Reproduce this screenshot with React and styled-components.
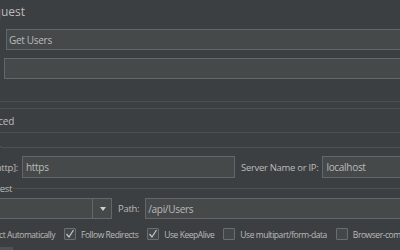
import React from "react";
import styled, { createGlobalStyle } from "styled-components";

const Global = createGlobalStyle`
  html, body { margin: 0; padding: 0; background: #3c3f41; overflow: hidden; }
  body { width: 400px; height: 250px; font-family: "Open Sans", "Noto Sans", sans-serif; color: #bbbbbb; }
`;

const Page = styled.div`
  width: 470px;
  display: flex;
  flex-direction: column;
`;

const Title = styled.div`
  height: 24px;
  width: 25px;
  display: flex;
  justify-content: flex-end;
  font-size: 12px;
  line-height: 24px;
  white-space: nowrap;
  margin-bottom: 5px;
`;

const Row = styled.div`
  display: flex;
  align-items: center;
  height: ${(p) => p.$h || 21}px;
  margin-top: ${(p) => p.$mt || 0}px;
  gap: ${(p) => (p.$gap != null ? p.$gap : 4)}px;
`;

const LabelCell = styled.div`
  width: ${(p) => p.$w}px;
  flex: none;
  display: flex;
  justify-content: flex-end;
  white-space: nowrap;
  font-size: 9.5px;
  letter-spacing: -0.3px;
`;

const Label = styled.span`
  flex: none;
  white-space: nowrap;
  font-size: 9.5px;
  letter-spacing: -0.3px;
`;

const Field = styled.div`
  box-sizing: border-box;
  height: 100%;
  ${(p) => (p.$w ? `width: ${p.$w}px; flex: none;` : "flex: 1;")}
  background: #45494a;
  border: 1px solid #646768;
  display: flex;
  align-items: center;
  padding-left: ${(p) => p.$pl || 2}px;
  font-size: 10px;
  letter-spacing: -0.3px;
  white-space: nowrap;
`;

const Line = styled.div`
  height: 1px;
  background: ${(p) => p.$c || "#4c4f51"};
  margin-top: ${(p) => p.$mt || 0}px;
`;

const TabRow = styled.div`
  height: 23px;
  width: 14px;
  display: flex;
  justify-content: flex-end;
  align-items: center;
  font-size: 10px;
  letter-spacing: -0.3px;
  white-space: nowrap;
`;

const Titled = styled.div`
  display: flex;
  align-items: center;
  height: 9px;
  margin-top: ${(p) => p.$mt || 0}px;
`;

const TitleText = styled.div`
  width: ${(p) => p.$w}px;
  flex: none;
  display: flex;
  justify-content: flex-end;
  white-space: nowrap;
  font-size: 9.5px;
  letter-spacing: -0.3px;
  line-height: 9px;
`;

const TitleRule = styled.div`
  flex: 1;
  height: 1px;
  background: #4e5153;
  margin-left: 1px;
`;

const Combo = styled.div`
  box-sizing: border-box;
  height: 100%;
  width: 172px;
  margin-left: -60px;
  flex: none;
  display: flex;
  background: #45494a;
  border: 1px solid #646768;
`;

const ComboText = styled.div`
  flex: 1;
  display: flex;
  align-items: center;
  padding-left: 3px;
  font-size: 10px;
`;

const ComboButton = styled.div`
  width: 18px;
  flex: none;
  border-left: 1px solid #646768;
  display: flex;
  align-items: center;
  justify-content: center;
`;

const Arrow = styled.div`
  width: 0;
  height: 0;
  border-left: 3.5px solid transparent;
  border-right: 3.5px solid transparent;
  border-top: 4px solid #d0d0d0;
  margin-left: 1px;
`;

const Checks = styled.div`
  display: flex;
  align-items: center;
  height: 12px;
  margin-top: 9px;
  gap: 9px;
`;

const CheckItem = styled.div`
  display: flex;
  align-items: center;
  gap: 5px;
  flex: none;
`;

const Box = styled.div`
  box-sizing: border-box;
  width: 12px;
  height: 12px;
  border: 1px solid #6b6e70;
  background: #43474a;
  border-radius: 1px;
  display: flex;
  align-items: center;
  justify-content: center;
`;

const CheckLabel = styled.span`
  font-size: 8.5px;
  letter-spacing: -0.45px;
  white-space: nowrap;
`;

const Stub = styled.div`
  width: 13px;
  height: 4px;
  margin-top: 7px;
  background: #4e5254;
`;

const Check = ({ on, children }) => (
  <CheckItem>
    <Box>
      {on && (
        <svg width="10" height="10" viewBox="0 0 10 10">
          <polyline points="1.5,5 4,8 8.5,1" fill="none" stroke="#c8c8c8" strokeWidth="1.2" />
        </svg>
      )}
    </Box>
    <CheckLabel>{children}</CheckLabel>
  </CheckItem>
);

export default function App() {
  return (
    <>
      <Global />
      <Page>
        <Title>HTTP Request</Title>
        <Row $gap={6}>
          <LabelCell $w={0}>Name:</LabelCell>
          <Field $pl={2}>Get Users</Field>
        </Row>
        <Row $mt={8}>
          <LabelCell $w={0}>Comments:</LabelCell>
          <Field />
        </Row>
        <Line $mt={22} />
        <Line $mt={6} />
        <TabRow>Basic Advanced</TabRow>
        <Line />
        <Titled $mt={10}>
          <TitleText $w={0}>Web Server</TitleText>
          <TitleRule />
        </Titled>
        <Row $h={22} $mt={4} $gap={4}>
          <LabelCell $w={18}>Protocol [http]:</LabelCell>
          <Field $w={213} $pl={3}>https</Field>
          <Label style={{ marginLeft: 2 }}>Server Name or IP:</Label>
          <Field $pl={3}>localhost</Field>
        </Row>
        <Titled $mt={6}>
          <TitleText $w={12}>HTTP Request</TitleText>
          <TitleRule />
        </Titled>
        <Row $mt={5} $gap={6}>
          <Combo>
            <ComboText>GET</ComboText>
            <ComboButton>
              <Arrow />
            </ComboButton>
          </Combo>
          <Label>Path:</Label>
          <Field $pl={2}>/api/Users</Field>
        </Row>
        <Checks>
          <LabelCell $w={55}>
            <CheckLabel>Redirect Automatically</CheckLabel>
          </LabelCell>
          <Check on>Follow Redirects</Check>
          <Check on>Use KeepAlive</Check>
          <Check>Use multipart/form-data</Check>
          <Check>Browser-compatible headers</Check>
        </Checks>
        <Stub />
      </Page>
    </>
  );
}
